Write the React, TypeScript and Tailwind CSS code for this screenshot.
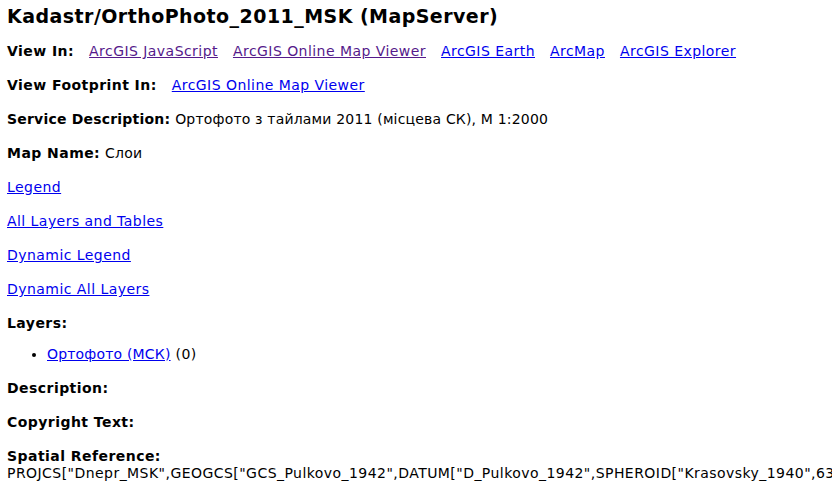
const VISITED = "text-[#551a8b] underline";
const LINK = "text-[#0000ee] underline";

const viewIn = [
  { label: "ArcGIS JavaScript", visited: true },
  { label: "ArcGIS Online Map Viewer", visited: true },
  { label: "ArcGIS Earth", visited: false },
  { label: "ArcMap", visited: false },
  { label: "ArcGIS Explorer", visited: false },
];

const WKT =
  'PROJCS["Dnepr_MSK",GEOGCS["GCS_Pulkovo_1942",DATUM["D_Pulkovo_1942",SPHEROID["Krasovsky_1940",6378245.0,298.3]],PRIMEM["Greenwich",0.0],UNIT["Degree",0.0174532925199433]],PROJECTION["Transverse_Mercator"],PARAMETER["False_Easting",0.0]]';

function Row({ children }: { children: React.ReactNode }) {
  return <div className="mb-[17px] whitespace-nowrap">{children}</div>;
}

// cyrillic runs come out a bit wider already, so they get less spacing
function Cyr({ children }: { children: React.ReactNode }) {
  return <span className="tracking-[0.18px]">{children}</span>;
}

export default function App() {
  return (
    <div
      className="h-[503px] w-[832px] overflow-hidden bg-white px-[7px] pt-[5px] text-[14px] leading-[17px] tracking-[0.45px] text-black"
      style={{ fontFamily: '"DejaVu Sans", Verdana, sans-serif' }}
    >
      <h2 className="mb-[15px] text-[19px] font-bold leading-[23px]">Kadastr/OrthoPhoto_2011_MSK (MapServer)</h2>

      <Row>
        <b>View In:</b>
        <span className="ml-[15px]" />
        {viewIn.map((v, i) => (
          <a key={v.label} href="#" className={`${v.visited ? VISITED : LINK} ${i > 0 ? "ml-[15px]" : ""}`}>
            {v.label}
          </a>
        ))}
      </Row>

      <Row>
        <b>View Footprint In:</b>
        <a href="#" className={`${LINK} ml-[15px]`}>
          ArcGIS Online Map Viewer
        </a>
      </Row>

      <Row>
        <b className="tracking-[0.2px]">Service Description:</b> <Cyr>Ортофото з тайлами 2011 (місцева СК), М 1:2000</Cyr>
      </Row>

      <Row>
        <b>Map Name:</b> <Cyr>Слои</Cyr>
      </Row>

      <Row>
        <a href="#" className={LINK}>Legend</a>
      </Row>
      <Row>
        <a href="#" className={LINK}>All Layers and Tables</a>
      </Row>
      <Row>
        <a href="#" className={LINK}>Dynamic Legend</a>
      </Row>
      <Row>
        <a href="#" className={LINK}>Dynamic All Layers</a>
      </Row>

      <div className="whitespace-nowrap">
        <b>Layers:</b>
      </div>
      <ul className="mt-[14px] mb-[17px] list-disc pl-[40px]">
        <li>
          <a href="#" className={LINK}>
            <Cyr>Ортофото (МСК)</Cyr>
          </a>{" "}
          (0)
        </li>
      </ul>

      <Row>
        <b>Description:</b>
      </Row>
      <Row>
        <b>Copyright Text:</b>
      </Row>

      <div className="whitespace-nowrap">
        <b>Spatial Reference:</b>
        <br />
        {WKT}
      </div>
    </div>
  );
}
